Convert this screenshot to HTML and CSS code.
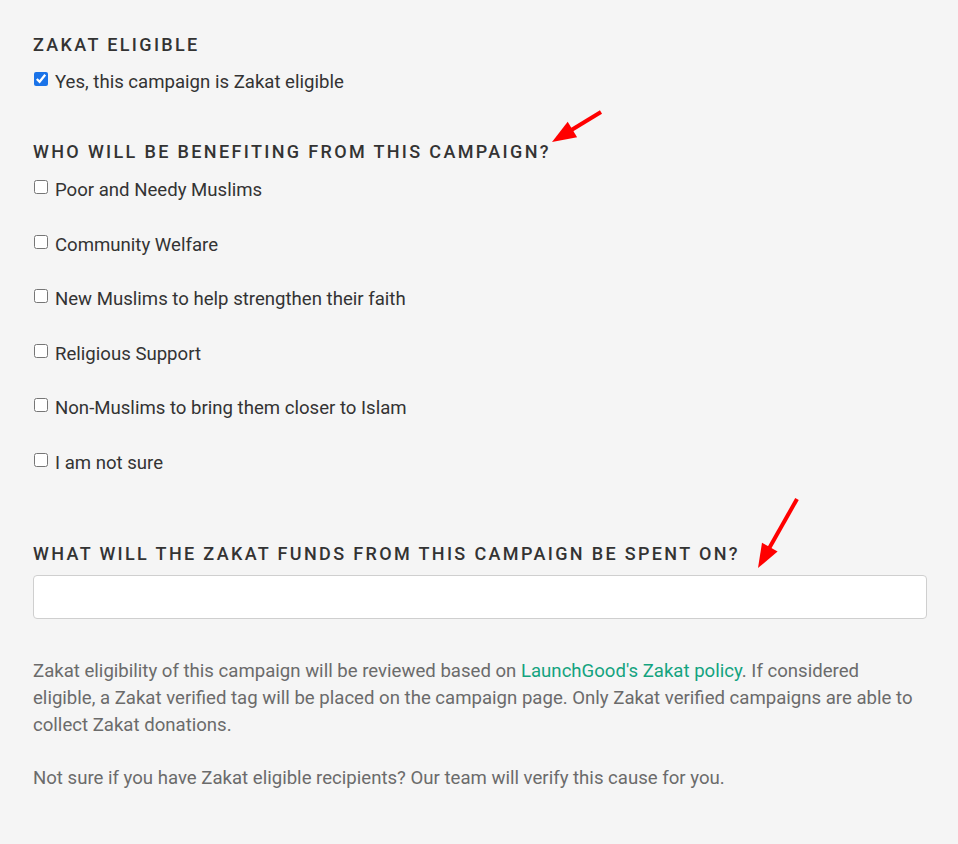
FILE: index.html
```html
<!DOCTYPE html>
<html lang="en">
<head>
<meta charset="utf-8">
<title>Zakat eligibility</title>
<link rel="stylesheet" href="styles.css">
</head>
<body>
<main class="form">
  <section class="group group-eligible">
    <h3 class="label">Zakat Eligible</h3>
    <label class="check"><input type="checkbox" checked> <span>Yes, this campaign is Zakat eligible</span></label>
  </section>

  <section class="group group-benefit">
    <h3 class="label">Who will be benefiting from this campaign?</h3>
    <div class="options">
      <label class="check"><input type="checkbox"> <span>Poor and Needy Muslims</span></label>
      <label class="check"><input type="checkbox"> <span>Community Welfare</span></label>
      <label class="check"><input type="checkbox"> <span>New Muslims to help strengthen their faith</span></label>
      <label class="check"><input type="checkbox"> <span>Religious Support</span></label>
      <label class="check"><input type="checkbox"> <span>Non-Muslims to bring them closer to Islam</span></label>
      <label class="check"><input type="checkbox"> <span>I am not sure</span></label>
    </div>
  </section>

  <section class="group group-spent">
    <h3 class="label">What will the Zakat funds from this campaign be spent on?</h3>
    <input class="text-input" type="text">
  </section>

  <section class="notes">
    <p>Zakat eligibility of this campaign will be reviewed based on <a href="#">LaunchGood's Zakat policy</a>. If considered eligible, a Zakat verified tag will be placed on the campaign page. Only Zakat verified campaigns are able to collect Zakat donations.</p>
    <p>Not sure if you have Zakat eligible recipients? Our team will verify this cause for you.</p>
  </section>
</main>

<svg class="arrow arrow-1" width="70" height="50" viewBox="0 0 70 50" aria-hidden="true">
  <line x1="61" y1="12" x2="31" y2="30.3" stroke="#ff0000" stroke-width="4"/>
  <polygon points="12,42 37.1,37.2 27.7,21.8" fill="#ff0000"/>
</svg>
<svg class="arrow arrow-2" width="70" height="90" viewBox="0 0 70 90" aria-hidden="true">
  <line x1="57" y1="9" x2="29" y2="58.5" stroke="#ff0000" stroke-width="4"/>
  <polygon points="18,78 37.6,61.5 22,52.7" fill="#ff0000"/>
</svg>
</body>
</html>
```

FILE: styles.css
```css
html, body {
  margin: 0;
  padding: 0;
  background: #f5f5f5;
}

body {
  font-family: Roboto, "Liberation Sans", Arial, sans-serif;
  color: #333333;
  font-size: 18.6px;
}

.form {
  width: 894px;
  margin-left: 33px;
  padding-top: 35px;
}

.label {
  margin: 0;
  font-size: 18px;
  font-weight: 500;
  letter-spacing: 2.35px;
  text-transform: uppercase;
  color: #333333;
  line-height: 20px;
}

.check {
  display: flex;
  align-items: flex-start;
  gap: 7px;
  line-height: 24px;
  color: #333333;
}

.check input {
  margin: 2px 0 0 1px;
  width: 14px;
  height: 14px;
  flex: none;
  accent-color: #1a73e8;
}

.group-eligible .check {
  margin-top: 15px;
}

.group-benefit {
  margin-top: 48px;
}

.options {
  display: flex;
  flex-direction: column;
  gap: 30.6px;
  margin-top: 16px;
}

.group-spent {
  margin-top: 69px;
}

.text-input {
  display: block;
  box-sizing: border-box;
  width: 894px;
  height: 44px;
  margin-top: 11px;
  border: 1px solid #cfcfcf;
  border-radius: 4px;
  background: #ffffff;
}

.notes {
  width: 888px;
  margin-top: 39px;
  color: #6b6b6b;
  line-height: 27px;
}

.notes p {
  margin: 0 0 26px;
}

.notes a {
  color: #14a37f;
  text-decoration: none;
}

.arrow {
  position: absolute;
}

.arrow-1 {
  left: 540px;
  top: 100px;
}

.arrow-2 {
  left: 740px;
  top: 490px;
}
```
